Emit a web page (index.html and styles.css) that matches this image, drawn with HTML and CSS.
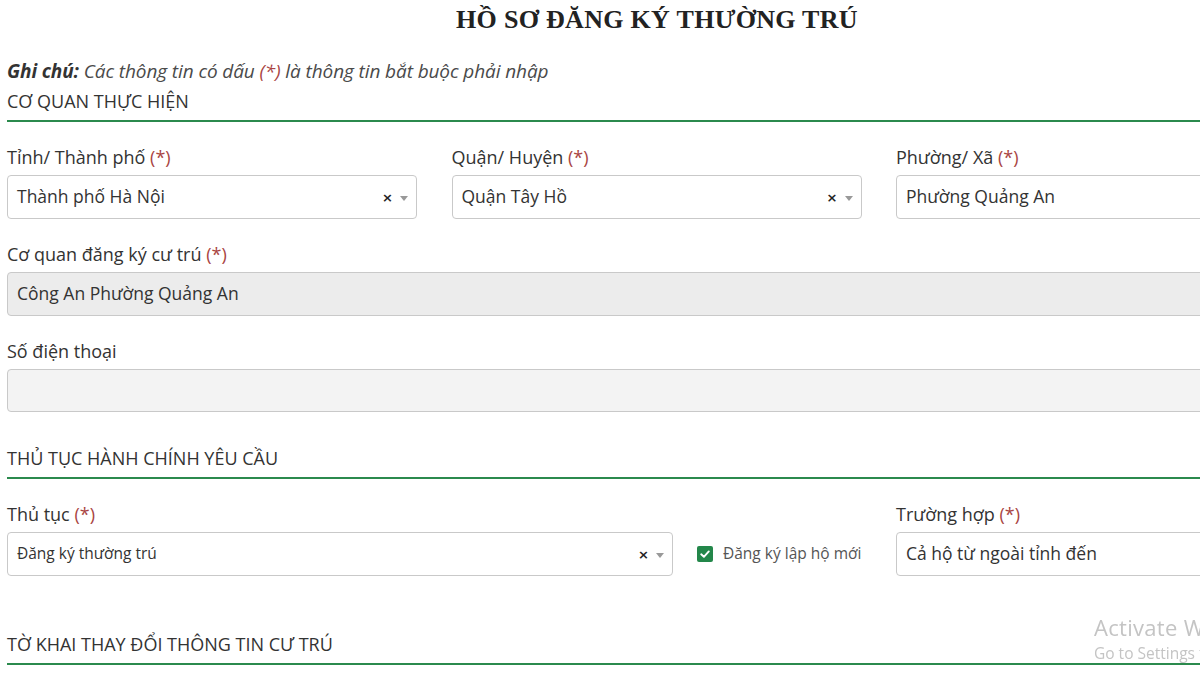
FILE: index.html
```html
<!DOCTYPE html>
<html lang="vi">
<head>
<meta charset="utf-8">
<title>Hồ sơ đăng ký thường trú</title>
<link rel="stylesheet" href="styles.css">
</head>
<body>
<div class="page">
  <h1 class="title">HỒ SƠ ĐĂNG KÝ THƯỜNG TRÚ</h1>
  <p class="note"><b>Ghi chú:</b> Các thông tin có dấu <span class="req">(*)</span> là thông tin bắt buộc phải nhập</p>

  <h2 class="section">CƠ QUAN THỰC HIỆN</h2>
  <div class="row three">
    <div class="field">
      <label>Tỉnh/ Thành phố <span class="req">(*)</span></label>
      <div class="input select"><span class="val">Thành phố Hà Nội</span><span class="ctl"><span class="clear">×</span><span class="arrow"></span></span></div>
    </div>
    <div class="field">
      <label>Quận/ Huyện <span class="req">(*)</span></label>
      <div class="input select"><span class="val">Quận Tây Hồ</span><span class="ctl"><span class="clear">×</span><span class="arrow"></span></span></div>
    </div>
    <div class="field">
      <label>Phường/ Xã <span class="req">(*)</span></label>
      <div class="input select"><span class="val">Phường Quảng An</span><span class="ctl"><span class="clear">×</span><span class="arrow"></span></span></div>
    </div>
  </div>
  <div class="field">
    <label>Cơ quan đăng ký cư trú <span class="req">(*)</span></label>
    <div class="input readonly"><span class="val">Công An Phường Quảng An</span></div>
  </div>
  <div class="field">
    <label>Số điện thoại</label>
    <div class="input disabled"></div>
  </div>

  <h2 class="section gap">THỦ TỤC HÀNH CHÍNH YÊU CẦU</h2>
  <div class="row proc">
    <div class="field">
      <label>Thủ tục <span class="req">(*)</span></label>
      <div class="input select small"><span class="val">Đăng ký thường trú</span><span class="ctl"><span class="clear">×</span><span class="arrow"></span></span></div>
    </div>
    <div class="check">
      <span class="box"><svg viewBox="0 0 16 16" width="16" height="16"><path d="M4.2 8.3 L6.9 10.8 L11.8 5.4" fill="none" stroke="#fff" stroke-width="1.9" stroke-linecap="round" stroke-linejoin="round"/></svg></span>
      <span class="check-label">Đăng ký lập hộ mới</span>
    </div>
    <div class="field">
      <label>Trường hợp <span class="req">(*)</span></label>
      <div class="input select"><span class="val">Cả hộ từ ngoài tỉnh đến</span><span class="ctl"><span class="clear">×</span><span class="arrow"></span></span></div>
    </div>
  </div>

  <h2 class="section gap2">TỜ KHAI THAY ĐỔI THÔNG TIN CƯ TRÚ</h2>
</div>
<div class="watermark">
  <div class="wm1">Activate Windows</div>
  <div class="wm2">Go to Settings to activate Windows.</div>
</div>
</body>
</html>
```
FILE: styles.css
```css
html, body {
  margin: 0;
  padding: 0;
  background: #fff;
  overflow: hidden;
}
body {
  font-family: "Open Sans", "Noto Sans", sans-serif;
  color: #333;
  width: 1200px;
  height: 675px;
}
.page {
  width: 1300px;
  padding-left: 7px;
}
.title {
  margin: 0;
  font-family: "Liberation Serif", "Times New Roman", serif;
  font-weight: bold;
  font-size: 26px;
  line-height: 40px;
  text-align: center;
  color: #222;
  letter-spacing: 0.3px;
}
.note {
  margin: 19px 0 0;
  font-size: 19px;
  line-height: 24px;
  font-style: italic;
  color: #4a4a4a;
  letter-spacing: -0.1px;
}
.note b {
  font-weight: 700;
  color: #333;
}
.req {
  color: #a94442;
}
.section {
  margin: 6px 0 0;
  font-size: 18px;
  font-weight: 400;
  line-height: 24px;
  padding-bottom: 7px;
  border-bottom: 2px solid #2b8a4d;
  color: #333;
}
.section.gap {
  margin-top: 34px;
}
.section.gap2 {
  margin-top: 56px;
}
.row.three {
  display: grid;
  grid-template-columns: 410px 410px 410px;
  column-gap: 34.5px;
  margin-top: 24px;
  margin-bottom: 24px;
}
.row.proc {
  display: grid;
  grid-template-columns: 666px 175px 410px;
  column-gap: 24px;
  margin-top: 24px;
}
.field {
  margin-bottom: 24px;
}
.section + .field {
  margin-top: 24px;
}
.row .field {
  margin-bottom: 0;
}
label {
  display: block;
  font-size: 18px;
  line-height: 22px;
  margin-bottom: 7px;
  color: #333;
}
.input {
  box-sizing: border-box;
  height: 44px;
  border: 1px solid #c9c9c9;
  border-radius: 4px;
  display: flex;
  align-items: center;
  padding: 0 8px 2px 9px;
  font-size: 17.5px;
  color: #333;
  background: #fff;
}
.input .val {
  flex: 1;
  white-space: nowrap;
}
.input.small {
  font-size: 15.5px;
}
.input.readonly {
  background: #ececec;
}
.input.disabled {
  background: #f3f3f3;
  height: 43px;
}
.ctl {
  display: flex;
  align-items: center;
  gap: 7px;
  padding-top: 2px;
}
.clear {
  font-size: 13px;
  font-weight: 700;
  color: #222;
  font-family: "DejaVu Sans", sans-serif;
  line-height: 1;
}
.arrow {
  width: 0;
  height: 0;
  border-left: 4px solid transparent;
  border-right: 4px solid transparent;
  border-top: 5px solid #999;
  margin-top: 2px;
}
.check {
  display: flex;
  align-items: center;
  gap: 10px;
  height: 44px;
  align-self: end;
}
.box {
  width: 16px;
  height: 16px;
  background: #23874a;
  border-radius: 2px;
  display: flex;
}
.check-label {
  font-size: 15.5px;
  color: #555;
  white-space: nowrap;
  padding-bottom: 2px;
}
.watermark {
  position: fixed;
  left: 1094px;
  top: 613px;
  color: #c4c4c4;
  white-space: nowrap;
}
.wm1 {
  font-size: 22px;
  line-height: 28px;
  letter-spacing: 0.3px;
}
.wm2 {
  font-size: 15.5px;
  line-height: 24px;
}
```
